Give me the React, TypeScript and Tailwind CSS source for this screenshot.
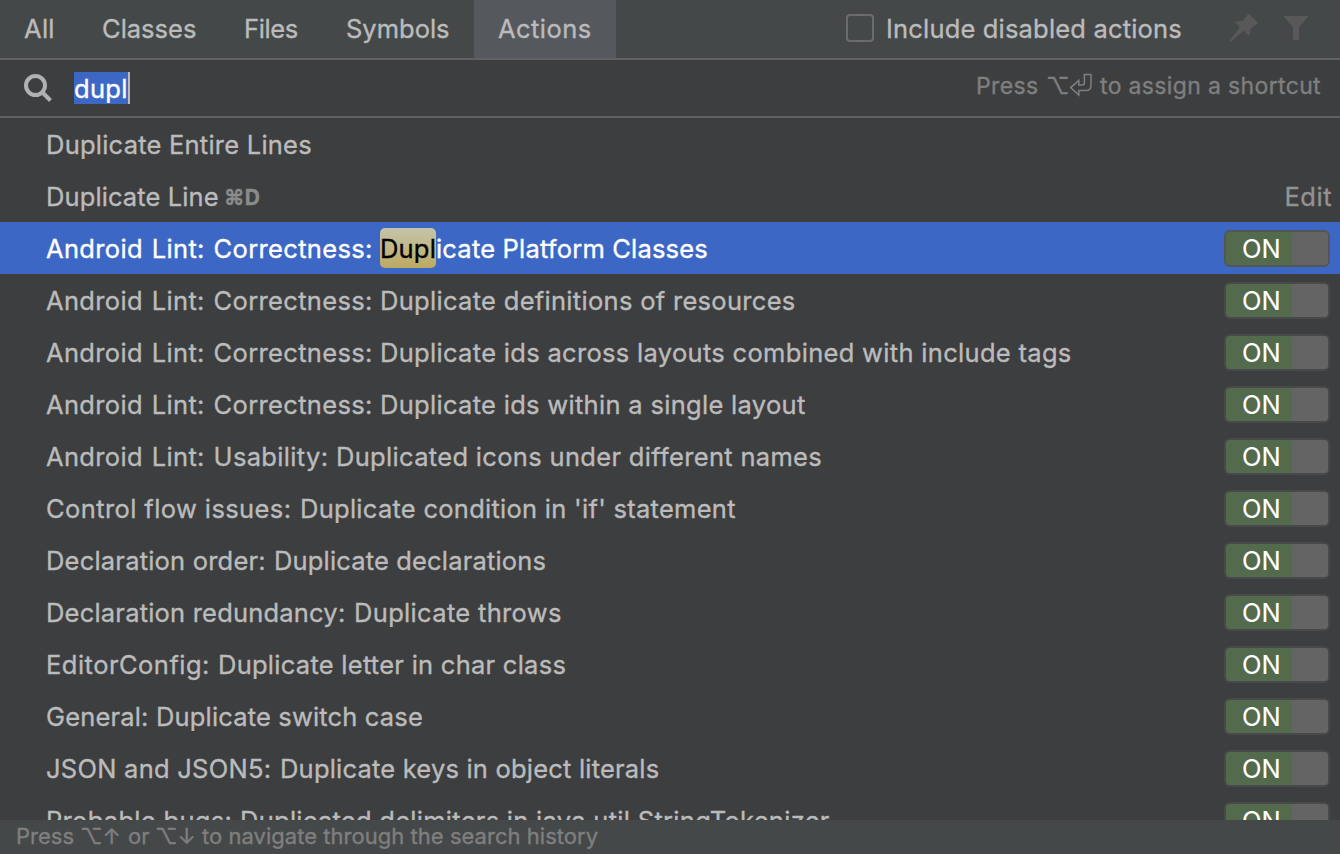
import type { ReactNode } from 'react';

type Lint = {
  prefix: string;
  prefixClass: string;
  rest: string;
  restClass: string;
  selected?: boolean;
};

const lints: Lint[] = [
  { prefix: 'Android Lint: Correctness:', prefixClass: 'w-[334px] tracking-[0.34px] [word-spacing:1.3px]', rest: 'Duplicate Platform Classes', restClass: 'tracking-[0.19px]', selected: true },
  { prefix: 'Android Lint: Correctness:', prefixClass: 'w-[334px] tracking-[0.34px] [word-spacing:1.3px]', rest: 'Duplicate definitions of resources', restClass: 'tracking-[0.3px]' },
  { prefix: 'Android Lint: Correctness:', prefixClass: 'w-[334px] tracking-[0.34px] [word-spacing:1.3px]', rest: 'Duplicate ids across layouts combined with include tags', restClass: 'tracking-[0.31px]' },
  { prefix: 'Android Lint: Correctness:', prefixClass: 'w-[334px] tracking-[0.34px] [word-spacing:1.3px]', rest: 'Duplicate ids within a single layout', restClass: 'tracking-[0.3px]' },
  { prefix: 'Android Lint: Usability:', prefixClass: 'w-[290px] tracking-[0.34px] [word-spacing:1.3px]', rest: 'Duplicated icons under different names', restClass: 'tracking-[0.32px]' },
  { prefix: 'Control flow issues:', prefixClass: 'w-[254px] tracking-[0.4px]', rest: "Duplicate condition in 'if' statement", restClass: 'tracking-[0.27px]' },
  { prefix: 'Declaration order:', prefixClass: 'w-[228px] tracking-[0.2px]', rest: 'Duplicate declarations', restClass: 'tracking-[0.16px]' },
  { prefix: 'Declaration redundancy:', prefixClass: 'w-[308px] tracking-[0.2px]', rest: 'Duplicate throws', restClass: 'tracking-[0.33px]' },
  { prefix: 'EditorConfig:', prefixClass: 'w-[172px] tracking-[0.48px]', rest: 'Duplicate letter in char class', restClass: 'tracking-[0.26px]' },
  { prefix: 'General:', prefixClass: 'w-[110px] tracking-[0.16px]', rest: 'Duplicate switch case', restClass: 'tracking-[0.16px]' },
  { prefix: 'JSON and JSON5:', prefixClass: 'w-[234px] tracking-[0.26px]', rest: 'Duplicate keys in object literals', restClass: 'tracking-[0.2px]' },
  { prefix: 'Probable bugs:', prefixClass: 'w-[194px] tracking-[0.3px]', rest: 'Duplicated delimiters in java.util.StringTokenizer', restClass: 'tracking-[0.27px]' },
];

function Tab({ className, children }: { className: string; children: ReactNode }) {
  return <div className={`flex h-full items-center pl-6 ${className}`}>{children}</div>;
}

function Toggle({ selected }: { selected?: boolean }) {
  return (
    <div className={`mt-px mr-[10px] flex h-[37px] w-[106px] shrink-0 overflow-hidden rounded-[6px] border-2 bg-[#536a4d] [-webkit-text-stroke:0.1px] ${selected ? 'border-[#545556]' : 'border-[#48494a]'}`}>
      <div className="w-[66px] pl-4 leading-[34px] text-white">ON</div>
      <div className="flex-1 rounded-l-[3px] bg-[#646464]" />
    </div>
  );
}

function LintRow({ prefix, prefixClass, rest, restClass, selected }: Lint) {
  return (
    <div className={`flex h-[52px] shrink-0 items-center pl-[46px] ${selected ? 'bg-[#3d67c4] text-white' : ''}`}>
      <span className={`shrink-0 pt-[2px] ${prefixClass}`}>{prefix}</span>
      {selected ? (
        <span className={`flex flex-1 items-center ${restClass}`}>
          <span className="h-10 w-14 rounded-[5px] bg-linear-to-b from-[#c5c4a9] to-[#bda961] leading-[42px] text-black">Dupl</span>
          <span className="pt-[2px]">{rest.slice(4)}</span>
        </span>
      ) : (
        <span className={`flex-1 pt-[2px] ${restClass}`}>{rest}</span>
      )}
      <Toggle selected={selected} />
    </div>
  );
}

export default function App() {
  return (
    <div className="flex h-[854px] w-[1340px] flex-col overflow-hidden bg-[#3d3e40] font-['Inter',sans-serif] text-[25.5px] whitespace-nowrap text-[#bbbbbb] [-webkit-text-stroke:0.35px]">
      <header className="flex h-[60px] shrink-0 items-center border-b-2 border-[#606264] bg-[#454849]">
        <Tab className="w-[78px] tracking-[0.3px]">All</Tab>
        <Tab className="w-[142px]">Classes</Tab>
        <Tab className="w-[102px] tracking-[-0.35px]">Files</Tab>
        <Tab className="w-[152px]">Symbols</Tab>
        <Tab className="w-[142px] bg-[#55585d] tracking-[0.45px]">Actions</Tab>
        <div className="ml-auto flex items-center">
          <span className="-mt-[2px] size-7 rounded-[4px] border-2 border-[#6b6c6d]" />
          <span className="ml-3 w-[343px] tracking-[0.18px]">Include disabled actions</span>
        </div>
        <svg className="-mt-[2px] h-[30px] w-[30px] shrink-0" viewBox="0 0 30 30" fill="#585858">
          <path d="M19.5 .5 29.3 10.3 21.5 15.5 20.5 23 14.8 17.8 1.5 29 .3 28.2 10.7 14.2 5.5 8.8 13.5 8Z" />
        </svg>
        <svg className="-mt-[2px] mr-8 ml-[25px] h-6 w-6 shrink-0" viewBox="0 0 24 24" fill="#585858">
          <path d="M0 0H24V1L15 11V24H9V11L0 1Z" />
        </svg>
      </header>
      <div className="flex h-[58px] shrink-0 items-center border-b-2 border-[#606264]">
        <svg className="ml-6 h-7 w-7 shrink-0" viewBox="0 0 28 28" fill="none" stroke="#afb1b3" strokeWidth="4">
          <circle cx="11.5" cy="11.5" r="9.5" />
          <path d="M18 18 26.5 26.5" />
        </svg>
        <div className="ml-[22px] h-8 w-14 border-r-2 border-[#bbbbbb] bg-[#3d67c4] leading-[34px] tracking-[0.3px] text-white">dupl</div>
        <div className="mr-[19px] ml-auto flex pb-1 text-[23px] text-[#7f7f7f]">
          <span className="w-[70px] tracking-[0.35px]">Press</span>
          <span className="w-[23px]">⌥</span>
          <svg className="mt-[4px] h-6 w-6 shrink-0" viewBox="0 0 24 24" fill="none" stroke="#7f7f7f" strokeWidth="1.5">
            <path d="M15.4 1.6H22V12.4Q22 17.4 17 17.4H9.8V22L1.6 14.6L9.8 7.4V11.9H13.4Q15.4 11.9 15.4 10Z" />
          </svg>
          <span className="ml-[7px] w-[221px] tracking-[0.35px]">to assign a shortcut</span>
        </div>
      </div>
      <main className="flex h-[702px] shrink-0 flex-col overflow-hidden">
        <div className="flex h-[52px] shrink-0 items-center pt-[2px] pl-[46px] tracking-[0.23px]">Duplicate Entire Lines</div>
        <div className="flex h-[52px] shrink-0 items-center pt-[2px] pl-[46px]">
          <span className="w-[178px] tracking-[0.1px]">Duplicate Line</span>
          <span className="pt-[2px] text-[21px] font-bold tracking-[0.3px] text-[#8b8b8b]">⌘D</span>
          <span className="mr-2 ml-auto tracking-[0.5px] text-[#929292]">Edit</span>
        </div>
        {lints.map((lint) => (
          <LintRow key={lint.prefix + lint.rest} {...lint} />
        ))}
      </main>
      <footer className="flex h-[34px] shrink-0 items-center bg-[#454849] pb-[2px] pl-4 text-[22px] text-[#7f7f7f]">
        <span className="w-[64px]">Press</span>
        <span className="w-[48px]">⌥↑</span>
        <span className="w-[27px]">or</span>
        <span className="w-[47px]">⌥↓</span>
        <span className="tracking-[0.03px]">to navigate through the search history</span>
      </footer>
    </div>
  );
}
